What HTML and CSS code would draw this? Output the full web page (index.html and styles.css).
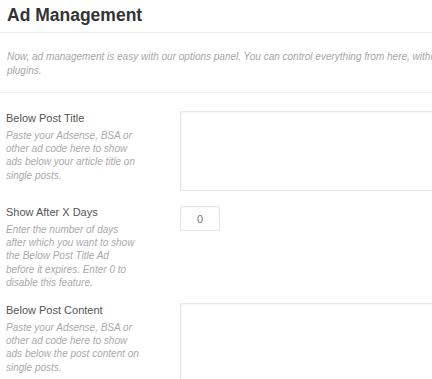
FILE: index.html
```html
<!DOCTYPE html>
<html lang="en">
<head>
    <meta charset="UTF-8">
    <title>Ad Management</title>
    <link rel="stylesheet" href="styles.css">
</head>
<body>
    <div class="panel">
        <h2 class="panel-title">Ad Management</h2>
        <p class="panel-intro">Now, ad management is easy with our options panel. You can control everything from here, without using any plugins.</p>

        <div class="option option-first">
            <div class="option-info">
                <div class="option-label">Below Post Title</div>
                <div class="option-desc">Paste your Adsense, BSA or other ad code here to show ads below your article title on single posts.</div>
            </div>
            <div class="option-field">
                <textarea class="code-box"></textarea>
            </div>
        </div>

        <div class="option">
            <div class="option-info">
                <div class="option-label">Show After X Days</div>
                <div class="option-desc">Enter the number of days after which you want to show the Below Post Title Ad before it expires. Enter 0 to disable this feature.</div>
            </div>
            <div class="option-field">
                <input class="small-input" type="text" value="0">
            </div>
        </div>

        <div class="option">
            <div class="option-info">
                <div class="option-label">Below Post Content</div>
                <div class="option-desc">Paste your Adsense, BSA or other ad code here to show ads below the post content on single posts.</div>
            </div>
            <div class="option-field">
                <textarea class="code-box"></textarea>
            </div>
        </div>
    </div>
</body>
</html>
```

FILE: styles.css
```css
body {
    margin: 0;
    background-color: #fff;
    font-family: "Liberation Sans", Arial, sans-serif;
    overflow: hidden;
}

.panel {
    width: 560px;
}

.panel-title {
    margin: 0;
    padding: 5px 7px 7px;
    font-size: 17.5px;
    line-height: 20px;
    font-weight: bold;
    color: #333;
    border-bottom: 1px solid #ededed;
}

.panel-intro {
    margin: 0;
    padding: 17px 7px 15px;
    font-size: 10px;
    line-height: 13.5px;
    font-style: italic;
    color: #a6a6a6;
    border-bottom: 1px solid #ededed;
    width: 490px;
}

.option {
    display: flex;
    padding: 7px 0 7px 6px;
}

.option-first {
    margin-top: 11px;
}

.option-info {
    width: 134px;
    margin-right: 40px;
}

.option-label {
    font-size: 11px;
    line-height: 14px;
    color: #555;
    margin-bottom: 4px;
}

.option-desc {
    font-size: 10px;
    line-height: 13.2px;
    font-style: italic;
    color: #aaa;
}

.option-field {
    flex: 1;
}

.code-box {
    display: block;
    width: 300px;
    height: 80px;
    margin: 0;
    padding: 4px;
    box-sizing: border-box;
    border: 1px solid #e8e8e8;
    box-shadow: inset 1px 1px 2px rgba(0, 0, 0, 0.05);
    background-color: #fff;
    resize: none;
}

.small-input {
    display: block;
    width: 40px;
    height: 25px;
    box-sizing: border-box;
    margin: 1px 0 0;
    border: 1px solid #e4e4e4;
    border-radius: 2px;
    box-shadow: inset 0 1px 2px rgba(0, 0, 0, 0.04);
    text-align: center;
    font-family: "Liberation Sans", Arial, sans-serif;
    font-size: 11px;
    color: #777;
}
```
